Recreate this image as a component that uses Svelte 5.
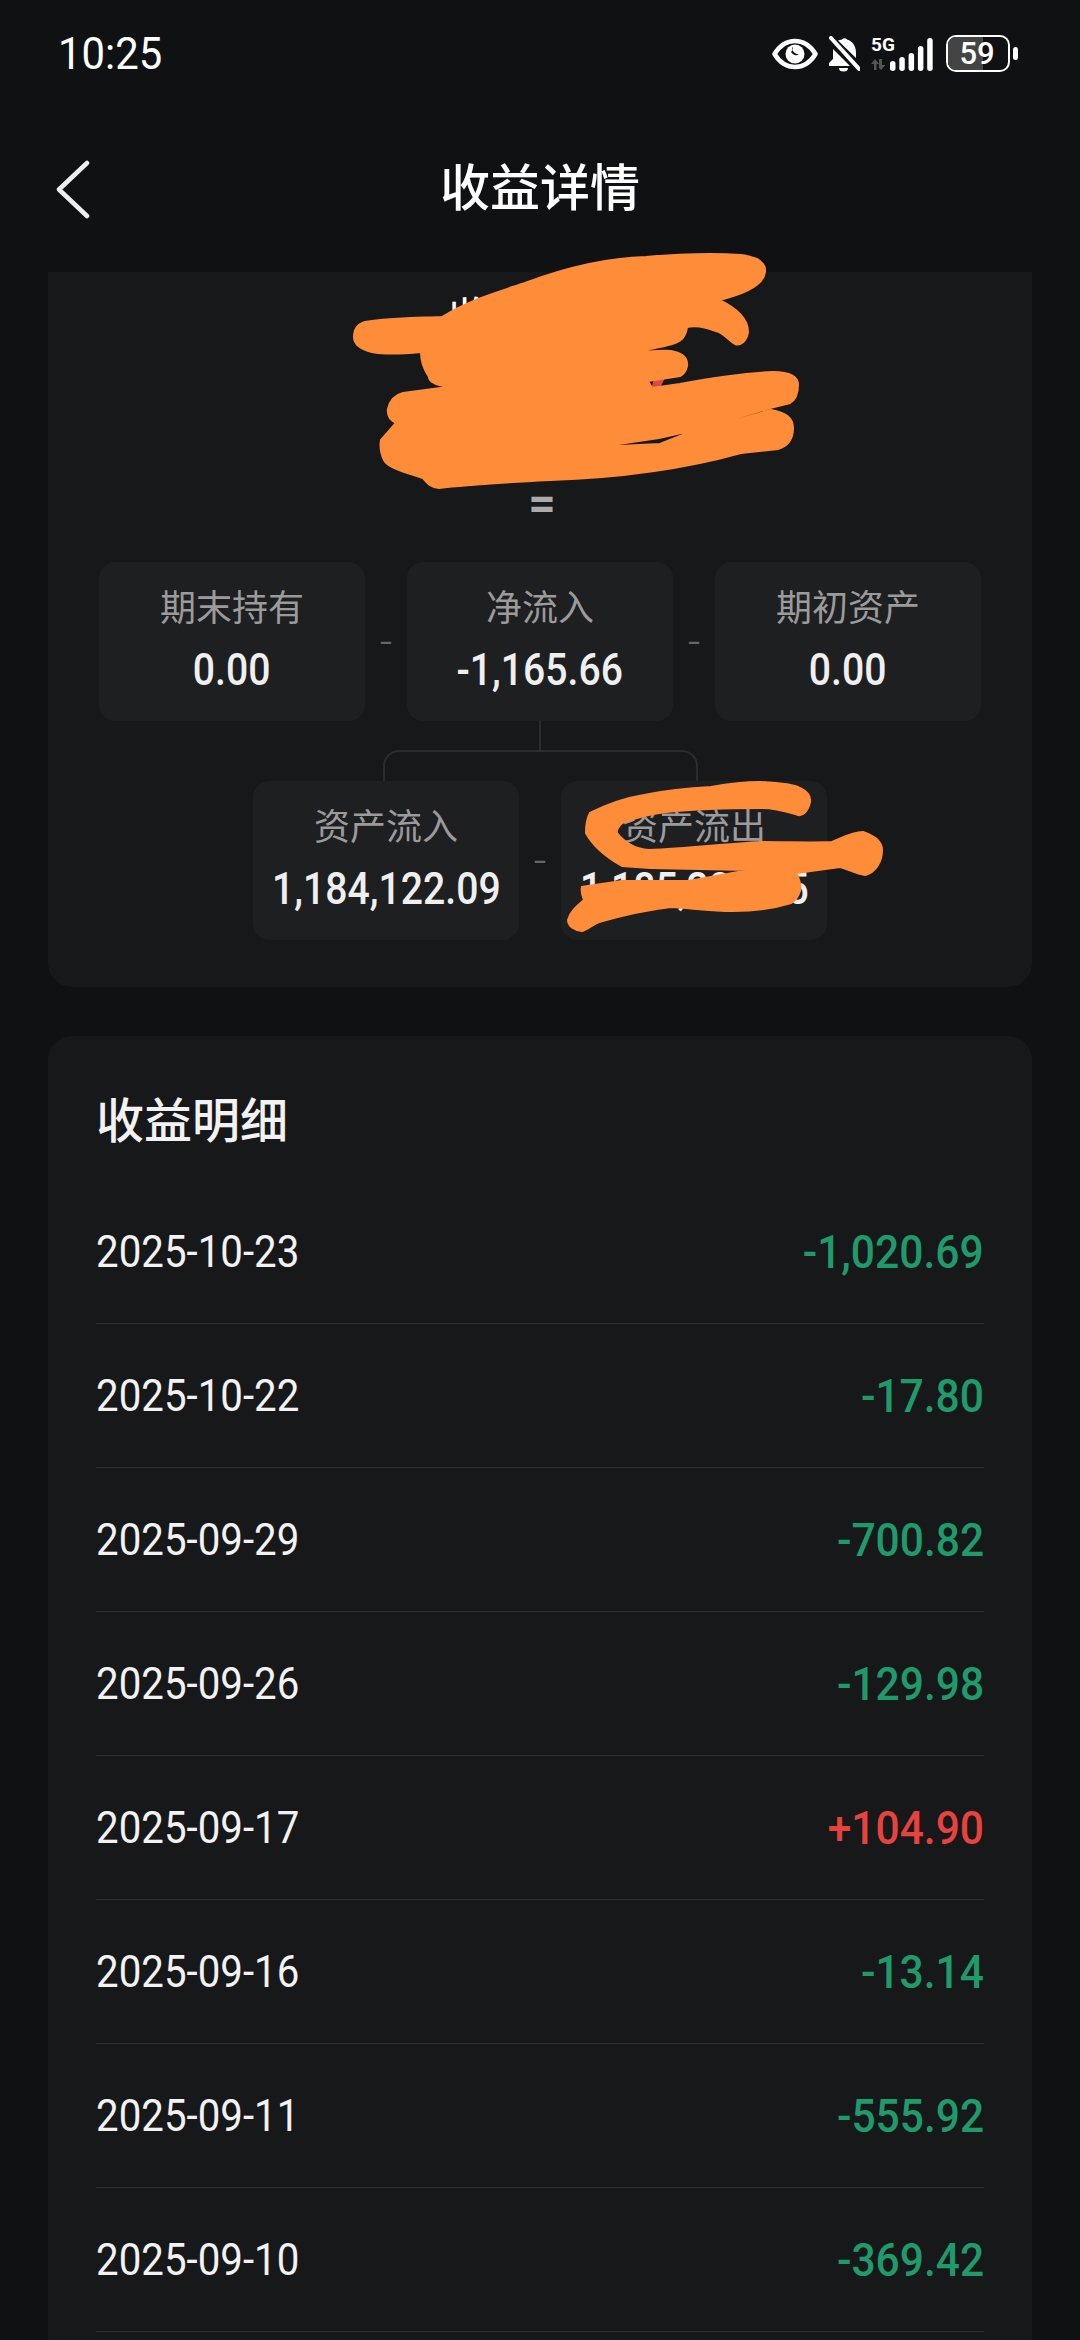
<script lang="ts">
  const rows = [
    { date: '2025-10-23', value: '-1,020.69' },
    { date: '2025-10-22', value: '-17.80' },
    { date: '2025-09-29', value: '-700.82' },
    { date: '2025-09-26', value: '-129.98' },
    { date: '2025-09-17', value: '+104.90' },
    { date: '2025-09-16', value: '-13.14' },
    { date: '2025-09-11', value: '-555.92' },
    { date: '2025-09-10', value: '-369.42' }
  ];
</script>

<div class="page">
  <div class="status">
    <span class="time">10:25</span>
    <div class="status-icons">
      <svg width="46" height="32" viewBox="0 0 46 32">
        <path d="M2.500 16C8 7 15 3 23 3S38 7 43.500 16C38 25 31 29 23 29S8 25 2.500 16Z" fill="none" stroke="#fff" stroke-width="4.500" stroke-linejoin="round"/>
        <circle cx="23" cy="16" r="9.500" fill="#fff"/>
        <path d="M20 8.500a7 7 0 0 0 7 8 6 6 0 0 1-8-2.500a4 4 0 0 0 1-5.500Z" fill="#101113"/>
      </svg>
      <svg class="bell" width="32" height="36" viewBox="0 0 32 36">
        <path d="M14 3.500a3 3 0 0 1 5 0C25 5 28 11 28 17V22L10 4.500Z" fill="#fff"/>
        <path d="M5 13L22 30H1V27L5 23Z" fill="#fff"/>
        <path d="M11 32h9a4.500 3.500 0 0 1-9 0Z" fill="#fff"/>
        <path d="M3 2L31 33" stroke="#fff" stroke-width="4" stroke-linecap="round"/>
      </svg>
      <div class="net">
        <span class="five-g">5G</span>
        <svg width="16" height="11" viewBox="0 0 16 11"><path d="M4 0L8 5H5.500V11H3V5H0ZM11 0V6H14.500L10 11L8 9V0Z" fill="#555"/></svg>
      </div>
      <svg class="signal" width="44" height="34" viewBox="0 0 44 34">
        <rect x="0" y="24" width="5.500" height="10" rx="2.700" fill="#fff"/>
        <rect x="9.300" y="20" width="5.500" height="14" rx="2.700" fill="#fff"/>
        <rect x="18.600" y="16" width="5.500" height="18" rx="2.700" fill="#fff"/>
        <rect x="27.900" y="9" width="5.500" height="25" rx="2.700" fill="#fff"/>
        <rect x="37.200" y="1" width="5.500" height="33" rx="2.700" fill="#fff"/>
      </svg>
      <div class="battery">
        <div class="battery-body"><div class="battery-fill"></div><span>59</span></div>
        <div class="battery-tip"></div>
      </div>
    </div>
  </div>

  <div class="nav">
    <svg class="back" width="36" height="60" viewBox="0 0 36 60"><path d="M32 3L4 29.500L32 56" fill="none" stroke="#eee" stroke-width="4.500" stroke-linecap="round" stroke-linejoin="round"/></svg>
    <h1>收益详情</h1>
  </div>

  <section class="card summary">
    <div class="sum-title">收益金额</div>
    <div class="equals">=</div>

    <div class="boxes">
      <div class="box"><span class="label">期末持有</span><span class="num">0.00</span></div>
      <span class="minus">-</span>
      <div class="box"><span class="label">净流入</span><span class="num">-1,165.66</span></div>
      <span class="minus">-</span>
      <div class="box"><span class="label">期初资产</span><span class="num">0.00</span></div>
    </div>

    <div class="link-v"></div>
    <div class="link-h"></div>

    <div class="boxes lower">
      <div class="box"><span class="label">资产流入</span><span class="num">1,184,122.09</span></div>
      <span class="minus">-</span>
      <div class="box"><span class="label">资产流出</span><span class="num">1,185,287.75</span></div>
    </div>
  </section>

  <section class="card detail">
    <h2>收益明细</h2>
    {#each rows as row}
      <div class="row">
        <span class="date">{row.date}</span>
        <span class="value" class:up={row.value.startsWith('+')}>{row.value}</span>
      </div>
    {/each}
  </section>

  <!-- orange scribbles drawn over the screenshot -->
  <svg class="scribble" width="1080" height="2340" viewBox="0 0 1080 2340">
    <path d="M654 378L665 378L659 390L651 390Z" fill="#e04848"/>
    <path fill="#ff8c38" stroke="#ff8c38" stroke-width="2" d="M741 255C757 257 766 262 765 272C764 282 752 292 719 300C738 309 748 320 748 332C747 341 740 346 735 344C728 340 724 333 716 331C706 327 696 325 687 327C686 336 682 341 672 344C658 348 640 351 622 354C640 352 658 350 671 351C682 353 688 358 687 366C686 371 684 374 680 376L648 381L652 388L680 384C712 378 745 373 773 372C790 372 798 377 798 385C798 394 795 400 790 403L770 408L716 424L690 431L659 438L598 447L660 444L690 432L716 426L771 410C786 413 793 418 793 428C793 438 788 446 778 449L741 453C680 470 610 478 550 480C510 482 470 484 439 488C432 488 428 484 423 478C405 472 388 468 384 460C380 452 380 446 381 440L396 423C390 420 387 416 388 409C390 400 395 395 403 393L448 387C436 385 429 381 429 377C423 368 421 360 421 352C400 354 382 354 372 352C360 349 354 344 354 337C354 328 358 324 365 322C390 318 420 318 442 317C470 300 495 293 525 283C565 268 605 258 646 257C680 254 715 253 741 255Z"/>
    <path fill="#ff8c38" stroke="#ff8c38" stroke-width="2" d="M760 782C780 783 795 785 800 788C808 792 811 796 810 802C808 811 803 816 798 815C788 812 778 808 762 808C730 808 695 809 666 812C650 814 635 818 622 823C618 827 616 830 617 833C625 843 635 849 649 850C690 848 725 844 762 842C790 842 812 843 832 842C842 838 852 832 863 832C875 836 882 842 882 850C882 862 875 873 865 875C856 874 848 869 840 867L796 873C800 880 801 886 800 891C798 897 795 901 791 903C775 908 755 911 733 911C712 911 690 908 671 907C645 910 620 916 599 922C592 925 587 930 582 931C574 930 568 926 568 920C570 912 577 906 584 900C582 895 581 891 582 887L622 881L689 881L749 870L650 868L622 866C608 858 594 848 586 833C586 824 587 818 590 813C606 805 625 798 644 795C668 790 690 788 711 787C728 784 744 782 760 782Z"/>
  </svg>
</div>

<style>
  :global(body) {
    margin: 0;
    background: #101113;
  }

  .page {
    position: relative;
    width: 1080px;
    height: 2340px;
    overflow: hidden;
    background: #101113;
    color: #fff;
    font-family: Roboto, "Noto Sans CJK SC", sans-serif;
  }

  .status {
    height: 110px;
    box-sizing: border-box;
    padding: 29px 62px 0 58px;
    display: flex;
    justify-content: space-between;
    align-items: flex-start;
  }

  .time {
    display: inline-block;
    font-size: 45px;
    line-height: 50px;
    transform: scaleX(0.93);
    transform-origin: left center;
  }

  .status-icons {
    display: flex;
    align-items: center;
    padding-top: 6px;
  }

  .bell { margin-left: 10px; }

  .net {
    margin-left: 11px;
    width: 19px;
    display: flex;
    flex-direction: column;
    gap: 6px;
  }

  .five-g {
    font-size: 19px;
    line-height: 16px;
    font-weight: 700;
    white-space: nowrap;
  }

  .battery {
    margin-left: 12px;
    display: flex;
    align-items: center;
    gap: 3px;
  }

  .battery-body {
    position: relative;
    width: 64px;
    height: 37px;
    box-sizing: border-box;
    border: 2.500px solid #fff;
    border-radius: 10px;
    overflow: hidden;
    display: flex;
    align-items: center;
    justify-content: center;
  }

  .battery-fill {
    position: absolute;
    left: 0;
    top: 0;
    bottom: 0;
    width: 59%;
    background: #444;
  }

  .battery-body span {
    position: relative;
    font-size: 31px;
    font-weight: 500;
    padding-right: 2px;
  }

  .battery-tip {
    width: 5px;
    height: 13px;
    border-radius: 3px;
    background: #fff;
  }

  .nav {
    position: relative;
    height: 162px;
    box-sizing: border-box;
    padding-top: 49px;
    text-align: center;
  }

  .back {
    position: absolute;
    left: 55px;
    top: 50px;
  }

  h1 {
    margin: 0;
    font-size: 50px;
    line-height: 60px;
    font-weight: 500;
  }

  .card {
    margin: 0 48px;
    background: #17181a;
  }

  .summary {
    height: 715px;
    box-sizing: border-box;
    padding-top: 22px;
    border-radius: 0 0 24px 24px;
    display: flex;
    flex-direction: column;
    align-items: center;
  }

  .sum-title {
    font-size: 46px;
    line-height: 50px;
  }

  .equals {
    margin-top: 136px;
    height: 82px;
    padding-left: 4px;
    font-size: 48px;
    line-height: 48px;
    font-weight: 700;
    color: #aaa;
  }

  .boxes {
    display: flex;
    align-items: center;
  }

  .box {
    width: 266px;
    height: 159px;
    box-sizing: border-box;
    padding-top: 22px;
    background: #1e1f21;
    border-radius: 16px;
    display: flex;
    flex-direction: column;
    align-items: center;
  }

  .label {
    font-size: 36px;
    line-height: 50px;
    color: #9b9b9b;
  }

  .num {
    margin-top: 11px;
    font-size: 45px;
    line-height: 50px;
    font-weight: 500;
    color: #efefef;
    white-space: nowrap;
    transform: scaleX(0.87);
  }

  .minus {
    width: 42px;
    text-align: center;
    color: #666;
    font-size: 44px;
    font-weight: 300;
  }

  .link-v {
    width: 2px;
    height: 29px;
    background: #2a2c2f;
  }

  .link-h {
    width: 315px;
    height: 31px;
    box-sizing: border-box;
    border: 2px solid #2a2c2f;
    border-bottom: 0;
    border-radius: 16px 16px 0 0;
  }

  .detail {
    margin-top: 49px;
    height: 1400px;
    box-sizing: border-box;
    padding: 0 48px;
    border-radius: 24px 24px 0 0;
  }

  h2 {
    margin: 0;
    padding-top: 56px;
    height: 88px;
    font-size: 48px;
    line-height: 60px;
    font-weight: 500;
    color: #f2f2f2;
  }

  .row {
    height: 144px;
    box-sizing: border-box;
    border-bottom: 1.500px solid #2c2d30;
    display: flex;
    justify-content: space-between;
    align-items: center;
  }

  .date {
    display: inline-block;
    font-size: 45px;
    color: #f2f2f2;
    transform: scaleX(0.895);
    transform-origin: left center;
  }

  .value {
    display: inline-block;
    font-size: 46px;
    font-weight: 500;
    color: #1f9a6a;
    transform: scaleX(0.925);
    transform-origin: right center;
  }

  .value.up { color: #e8423f; }

  .scribble {
    position: absolute;
    left: 0;
    top: 0;
    pointer-events: none;
  }
</style>
